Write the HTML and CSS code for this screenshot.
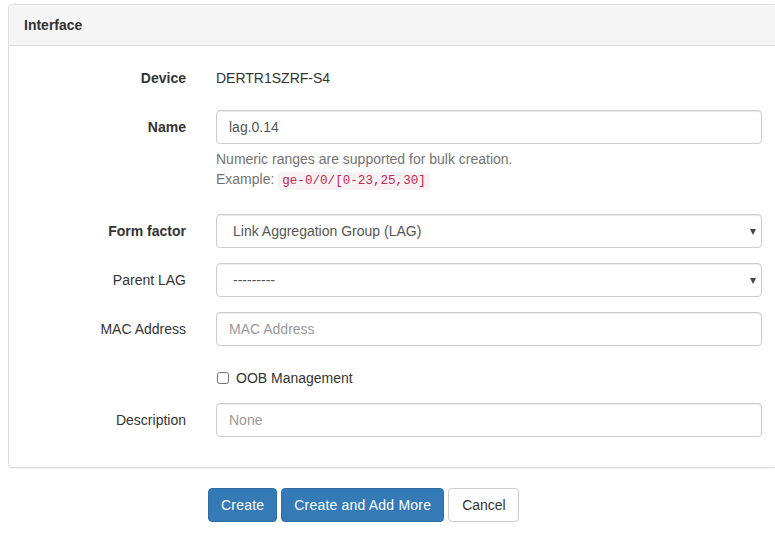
FILE: index.html
```html
<!DOCTYPE html>
<html>
<head>
<meta charset="utf-8">
<link rel="stylesheet" href="styles.css">
</head>
<body>
<div class="page">
  <div class="panel">
    <div class="panel-heading">Interface</div>
    <div class="panel-body">
      <div class="form-group">
        <label class="control-label required">Device</label>
        <div class="field"><p class="static">DERTR1SZRF-S4</p></div>
      </div>
      <div class="form-group">
        <label class="control-label required">Name</label>
        <div class="field">
          <input class="form-control" type="text" value="lag.0.14">
          <span class="help-block">Numeric ranges are supported for bulk creation.<br>Example: <code>ge-0/0/[0-23,25,30]</code></span>
        </div>
      </div>
      <div class="form-group">
        <label class="control-label required">Form factor</label>
        <div class="field">
          <div class="select-wrap">
            <select class="form-control select"><option>Link Aggregation Group (LAG)</option></select>
          </div>
        </div>
      </div>
      <div class="form-group">
        <label class="control-label">Parent LAG</label>
        <div class="field">
          <div class="select-wrap">
            <select class="form-control select"><option>---------</option></select>
          </div>
        </div>
      </div>
      <div class="form-group">
        <label class="control-label">MAC Address</label>
        <div class="field"><input class="form-control" type="text" placeholder="MAC Address"></div>
      </div>
      <div class="form-group">
        <div class="control-label"></div>
        <div class="field">
          <div class="checkbox"><label><input type="checkbox"> OOB Management</label></div>
        </div>
      </div>
      <div class="form-group">
        <label class="control-label">Description</label>
        <div class="field"><input class="form-control" type="text" placeholder="None"></div>
      </div>
    </div>
  </div>
  <div class="actions">
    <button class="btn btn-primary">Create</button>
    <button class="btn btn-primary">Create and Add More</button>
    <button class="btn btn-default">Cancel</button>
  </div>
</div>
</body>
</html>
```

FILE: styles.css
```css
html, body {
  margin: 0;
  padding: 0;
  overflow: hidden;
  background: #fff;
}
body {
  font-family: "Liberation Sans", Arial, sans-serif;
  font-size: 14px;
  line-height: 20px;
  color: #333;
}
.page {
  padding: 4px 0 0 8px;
  width: 770px;
}
.panel {
  border: 1px solid #ddd;
  border-radius: 4px;
  margin-bottom: 20px;
  box-shadow: 0 1px 1px rgba(0,0,0,0.05);
  background: #fff;
}
.panel-heading {
  background: #f5f5f5;
  border-bottom: 1px solid #ddd;
  border-radius: 3px 3px 0 0;
  padding: 10px 15px;
  font-weight: bold;
  color: #333;
}
.panel-body {
  padding: 15px 0;
}
.form-group {
  display: flex;
  margin-bottom: 15px;
}
.control-label {
  box-sizing: border-box;
  width: 192px;
  flex: none;
  padding: 7px 15px 0 15px;
  text-align: right;
  font-weight: normal;
}
.control-label.required {
  font-weight: bold;
}
.field {
  flex: 1;
  padding: 0 15px;
  min-width: 0;
}
.static {
  margin: 0;
  padding: 7px 0;
  min-height: 20px;
}
.form-control {
  display: block;
  box-sizing: border-box;
  width: 100%;
  height: 34px;
  padding: 6px 12px;
  font-family: inherit;
  font-size: 14px;
  line-height: 20px;
  color: #555;
  background: #fff;
  border: 1px solid #ccc;
  border-radius: 4px;
  box-shadow: inset 0 1px 1px rgba(0,0,0,0.075);
  margin: 0;
}
.form-control::placeholder {
  color: #999;
}
.select-wrap {
  position: relative;
}
.select {
  -webkit-appearance: none;
  appearance: none;
  padding-left: 16px;
  color: #555;
}
.select-wrap::after {
  content: "";
  position: absolute;
  right: 6px;
  top: 15px;
  border-left: 3.5px solid transparent;
  border-right: 3.5px solid transparent;
  border-top: 6px solid #444;
  pointer-events: none;
}
.help-block {
  display: block;
  margin-top: 5px;
  margin-bottom: 10px;
  color: #737373;
  height: 40px;
}
code {
  font-family: "Liberation Mono", monospace;
  font-size: 90%;
  line-height: 1;
  padding: 2px 4px;
  color: #c7254e;
  background: #f9f2f4;
  border-radius: 4px;
}
.checkbox {
  padding-top: 7px;
  height: 20px;
}
.checkbox label {
  display: flex;
  align-items: center;
  height: 20px;
  font-weight: normal;
}
.checkbox input {
  margin: 0 7px 0 1px;
  width: 12px;
  height: 12px;
}
.actions {
  display: flex;
  gap: 4px;
  padding-left: 200px;
}
.btn {
  font-family: inherit;
  font-size: 14px;
  line-height: 20px;
  padding: 6px 12px;
  border: 1px solid transparent;
  border-radius: 4px;
  margin: 0;
}
.btn-primary {
  color: #fff;
  background: #337ab7;
  border-color: #2e6da4;
  letter-spacing: 0.2px;
}
.btn-default {
  color: #333;
  background: #fff;
  border-color: #ccc;
  padding: 6px 12px 6px 13px;
}
```
